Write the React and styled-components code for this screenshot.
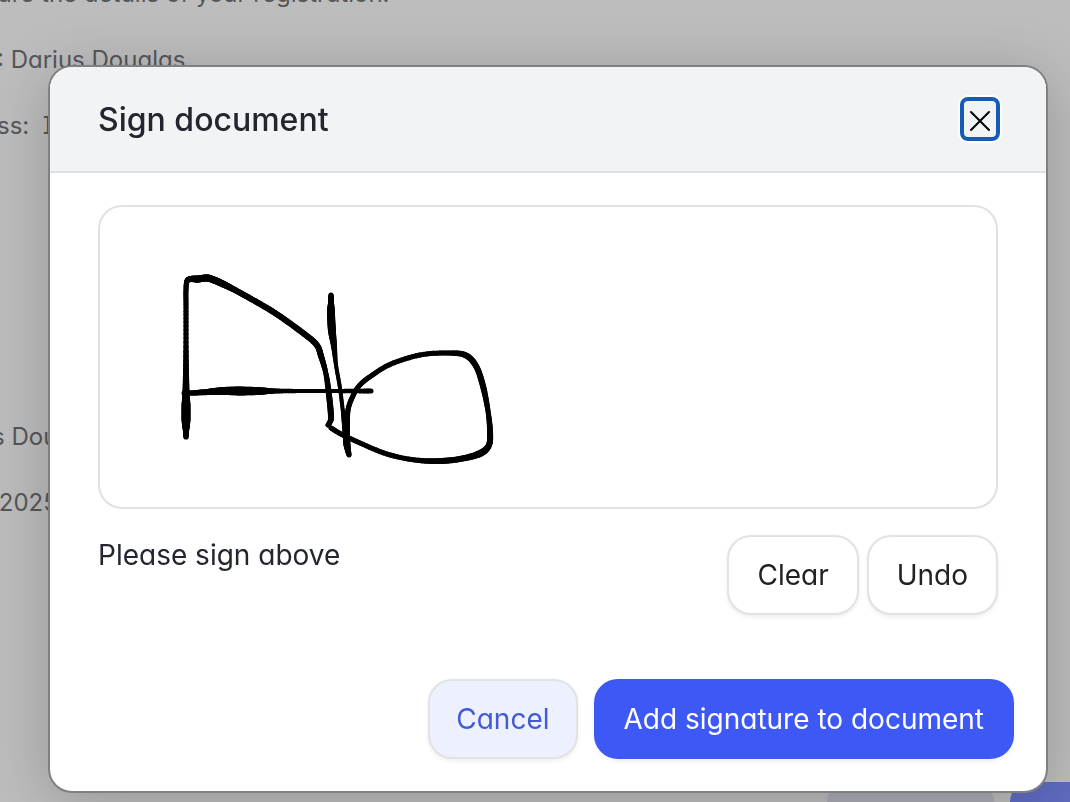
import React from 'react';
import styled, { createGlobalStyle } from 'styled-components';

const GlobalStyle = createGlobalStyle`
	* {
		box-sizing: border-box;
	}

	body {
		margin: 0;
		background: #bdbdbd;
		color: #23252f;
		font-family: Inter, 'Liberation Sans', sans-serif;
		font-feature-settings: 'cv11', 'cv08';
	}

	h2, p {
		margin: 0;
	}
`;

const Page = styled.main`
	display: flex;
	flex-direction: column;
	height: 100vh;
	overflow: hidden;
	color: #56575b;
	font-size: 24px;
	line-height: 32px;
	white-space: pre;
`;

const Lines = styled.div`
	display: flex;
	flex-direction: column;
	gap: 34px;
	margin-top: ${({ $top }) => $top}px;
	margin-left: ${({ $left }) => $left}px;
`;

const PageFooter = styled.div`
	display: flex;
	justify-content: flex-end;
	gap: 16px;
	margin-top: auto;
	padding-left: 48px;
`;

const PageAction = styled.div`
	width: ${({ $primary }) => ($primary ? 60 : 167)}px;
	height: 20px;
	border-radius: 24px 0 0 0;
	border-top-right-radius: ${({ $primary }) => ($primary ? 0 : 24)}px;
	background: ${({ $primary }) => ($primary ? '#5f6cc0' : '#acacb6')};
`;

const Overlay = styled.div`
	position: fixed;
	inset: 0;
	padding: 67px 24px 0 50px;
	overflow: hidden;
`;

const Dialog = styled.section`
	border-radius: 22px;
	background: #fff;
	box-shadow: 0 0 0 2px #808080, 0 10px 64px rgba(0, 0, 0, 0.22);
`;

const Header = styled.header`
	display: flex;
	align-items: center;
	justify-content: space-between;
	height: 106px;
	padding: 0 46px 0 48px;
	border-bottom: 2px solid #dfe0e2;
	border-radius: 22px 22px 0 0;
	background: #f2f3f5;
`;

const Title = styled.h2`
	padding-top: 2px;
	font-size: 32px;
	font-weight: 500;
	line-height: 40px;
`;

const CloseButton = styled.button`
	display: flex;
	align-items: center;
	justify-content: center;
	width: 40px;
	height: 44px;
	padding: 4px 0 0;
	border: 4px solid #145cb8;
	border-radius: 8px;
	background: #f2f3f5;
	box-shadow: 0 0 0 2px #fff;
	color: #000;
`;

const Body = styled.div`
	padding: 32px 48px 0;
`;

const Pad = styled.div`
	height: 304px;
	border: 2px solid #e1e1e3;
	border-radius: 24px;
	overflow: hidden;

	svg {
		display: block;
	}
`;

const PadFooter = styled.div`
	display: flex;
	align-items: flex-start;
	justify-content: space-between;
	margin-top: 26px;
`;

const Hint = styled.p`
	font-size: 28px;
	line-height: 40px;
`;

const ButtonRow = styled.div`
	display: flex;
	gap: 8px;
`;

const Button = styled.button`
	height: 80px;
	padding: 0 28px;
	border: 2px solid #e2e2e5;
	border-radius: 24px;
	background: #fff;
	box-shadow: 0 2px 4px rgba(0, 0, 0, 0.07);
	color: #202227;
	font: inherit;
	font-feature-settings: inherit;
	font-size: 28px;
	line-height: 40px;
`;

const CancelButton = styled(Button)`
	padding: 0 26px;
	background: #edf0ff;
	color: #435ad3;
`;

const SubmitButton = styled(Button)`
	border-color: #3e58f5;
	background: #3e58f5;
	color: #fff;
`;

const Actions = styled.footer`
	display: flex;
	justify-content: flex-end;
	gap: 16px;
	padding: 64px 32px 32px;
`;

// each point is x, y, pen width
const strokes = [
	[
		[86, 229, 5], [86, 222, 6], [86, 211, 9], [86, 197, 9], [86, 185, 7],
		[86, 165, 6], [86, 130, 5], [86, 100, 5], [86, 82, 5], [87, 73, 5],
		[91, 71, 6], [98, 71, 7], [107, 70, 7], [114, 72, 7], [123, 76, 7],
		[135, 82, 6], [153, 92, 6], [175, 105, 6], [199, 122, 6],
		[216, 136, 6], [221, 148, 6], [226, 166, 5], [229, 187, 6],
		[231, 208, 6], [230, 214, 5], [228, 217, 5],
	],
	[
		[231, 220, 5], [241, 226, 5], [260, 235, 5], [287, 246, 5],
		[315, 252, 5], [342, 253, 6], [365, 250, 6], [381, 245, 7],
		[389, 237, 6], [390, 223, 6], [388, 203, 5], [383, 178, 6],
		[376, 158, 6], [365, 147, 6], [346, 145, 5], [320, 147, 5],
		[291, 156, 5], [271, 168, 5], [259, 178, 5], [252, 190, 5],
		[248, 202, 5], [247, 217, 6], [247, 234, 6],
	],
	[
		[231, 87, 5], [231, 96, 6], [231, 106, 8], [232, 123, 8],
		[234, 138, 6], [236, 157, 4], [240, 180, 4], [243, 204, 4],
		[246, 223, 7], [247, 237, 7], [249, 247, 5],
	],
	[
		[84, 185, 5], [92, 185, 5], [107, 184, 6], [124, 183, 8],
		[141, 183, 9], [159, 183, 8], [176, 183, 5], [203, 183, 4],
		[235, 183, 4], [271, 183, 5],
	],
];

const spline = (a, b, c, d, t) =>
	0.5 * (2 * b + (c - a) * t + (2 * a - 5 * b + 4 * c - d) * t * t + (3 * b - a - 3 * c + d) * t * t * t);

const STEPS = 8;

// smooth the points and draw each short piece with its own width
const getSegments = (points) => {
	const segments = [];
	let last = points[0];
	for (let i = 0; i < points.length - 1; i++) {
		const a = points[i - 1] || points[i];
		const b = points[i];
		const c = points[i + 1];
		const d = points[i + 2] || c;
		for (let s = 1; s <= STEPS; s++) {
			const t = s / STEPS;
			const next = [
				spline(a[0], b[0], c[0], d[0], t),
				spline(a[1], b[1], c[1], d[1], t),
				b[2] + (c[2] - b[2]) * t,
			];
			segments.push([last, next]);
			last = next;
		}
	}
	return segments;
};

const Signature = () => (
	<svg width="500" height="300" viewBox="0 -1 500 300" role="img" aria-label="Signature">
		<g stroke="#000" strokeLinecap="round">
			{strokes.map((points, i) =>
				getSegments(points).map(([from, to], j) => (
					<line key={`${i}-${j}`} x1={from[0]} y1={from[1]} x2={to[0]} y2={to[1]} strokeWidth={to[2]} />
				))
			)}
		</g>
	</svg>
);

const App = () => {
	return (
		<>
			<GlobalStyle />
			<Page>
				<Lines $top={-22} $left={-3}>
					<p>are the details of your registration:</p>
					<p>: Darius Douglas</p>
					<p>ss:  I</p>
				</Lines>
				<Lines $top={279} $left={-8}>
					<p>s Douglas</p>
					<p> 2025</p>
				</Lines>
				<PageFooter>
					<PageAction />
					<PageAction $primary />
				</PageFooter>
			</Page>
			<Overlay>
				<Dialog role="dialog" aria-labelledby="sign-title">
					<Header>
						<Title id="sign-title">Sign document</Title>
						<CloseButton type="button" aria-label="Close">
							<svg width="22" height="22" viewBox="0 0 22 22" stroke="currentColor" strokeWidth="2" strokeLinecap="round">
								<path d="M2 2l18 18M20 2L2 20" />
							</svg>
						</CloseButton>
					</Header>
					<Body>
						<Pad>
							<Signature />
						</Pad>
						<PadFooter>
							<Hint>Please sign above</Hint>
							<ButtonRow>
								<Button type="button">Clear</Button>
								<Button type="button">Undo</Button>
							</ButtonRow>
						</PadFooter>
					</Body>
					<Actions>
						<CancelButton type="button">Cancel</CancelButton>
						<SubmitButton type="button">Add signature to document</SubmitButton>
					</Actions>
				</Dialog>
			</Overlay>
		</>
	);
};

export default App;
